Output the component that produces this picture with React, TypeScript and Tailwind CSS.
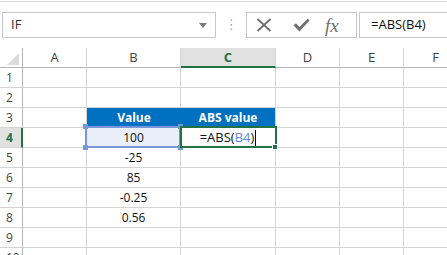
import React from "react";

type Col = { key: string; width: string };

const cols: Col[] = [
  { key: "A", width: "w-[64px]" },
  { key: "B", width: "w-[94px]" },
  { key: "C", width: "w-[95px]" },
  { key: "D", width: "w-[64px]" },
  { key: "E", width: "w-[64px]" },
  { key: "F", width: "w-[64px]" },
];

const values: Record<number, string> = {
  4: "100",
  5: "-25",
  6: "85",
  7: "-0.25",
  8: "0.56",
};

function FormulaBar() {
  return (
    <div className="pt-[1px]">
      <div className="flex items-start border-t border-[#d5d5d5] pt-[10px] pb-[10px]">
        <div className="ml-[2px] flex h-[26px] w-[214px] shrink-0 items-center justify-between border border-[#c6c6c6] bg-white pl-[8px] pr-[8px]">
          <span className="text-[13px] text-[#333]">IF</span>
          <svg width="8" height="5" viewBox="0 0 8 5">
            <path d="M0 0 L8 0 L4 5 Z" fill="#7a7a7a" />
          </svg>
        </div>
        <div className="flex h-[26px] w-[30px] shrink-0 items-center justify-center">
          <svg width="3" height="12" viewBox="0 0 3 12">
            <rect x="0.5" y="0.5" width="1.6" height="1.6" fill="#a8a8a8" />
            <rect x="0.5" y="5" width="1.6" height="1.6" fill="#a8a8a8" />
            <rect x="0.5" y="9.5" width="1.6" height="1.6" fill="#a8a8a8" />
          </svg>
        </div>
        <div className="flex h-[26px] w-[111px] shrink-0 items-center border border-[#c6c6c6] bg-white">
          <svg className="ml-[9px]" width="16" height="14" viewBox="0 0 16 14">
            <path d="M1.5 1 L14.5 13 M14.5 1 L1.5 13" stroke="#6f6f6f" strokeWidth="1.9" />
          </svg>
          <svg className="ml-[21px]" width="17" height="14" viewBox="0 0 17 14">
            <path d="M0.5 7.2 L3 5.2 L6.4 9 L14.8 0.6 L16.5 2.6 L6.4 13.4 Z" fill="#6f6f6f" />
          </svg>
          <span className="ml-[15px] font-['Liberation_Serif',serif] text-[19px] italic leading-none text-[#6f6f6f]">
            fx
          </span>
        </div>
        <div className="ml-[2px] flex h-[26px] w-[200px] shrink-0 items-center border border-[#c6c6c6] bg-white pl-[11px]">
          <span className="text-[13px] text-[#111]">=ABS(B4)</span>
        </div>
      </div>
    </div>
  );
}

function HeaderRow() {
  return (
    <div className="flex h-[20px]">
      <div className="relative h-[20px] w-[23px] shrink-0 border-r border-b border-[#b5b5b5] bg-white">
        <svg className="absolute right-[3px] bottom-[2px]" width="12" height="12" viewBox="0 0 12 12">
          <path d="M12 0 L12 12 L0 12 Z" fill="#dcdcdc" />
        </svg>
      </div>
      {cols.map((c) =>
        c.key === "C" ? (
          <div
            key={c.key}
            className={`${c.width} flex h-[20px] shrink-0 items-center justify-center border-r border-b-2 border-r-[#d4d4d4] border-b-[#217346] bg-[#e1e1e1] pt-[1px] text-[13px] font-bold text-[#217346]`}
          >
            {c.key}
          </div>
        ) : (
          <div
            key={c.key}
            className={`${c.width} flex h-[20px] shrink-0 items-center justify-center border-r border-b border-r-[#d4d4d4] border-b-[#b5b5b5] bg-white text-[13px] text-[#444]`}
          >
            {c.key}
          </div>
        )
      )}
    </div>
  );
}

function Row({ n }: { n: number }) {
  const active = n === 4;
  return (
    <div className="flex h-[20px]">
      {active ? (
        <div className="flex h-[20px] w-[23px] shrink-0 items-center border-r-2 border-b border-r-[#217346] border-b-[#d4d4d4] bg-[#e1e1e1] pl-[6px] text-[12px] font-bold text-[#217346]">
          {n}
        </div>
      ) : (
        <div className="flex h-[20px] w-[23px] shrink-0 items-center border-r border-b border-r-[#b5b5b5] border-b-[#d4d4d4] bg-white pl-[6px] text-[12px] text-[#444]">
          {n}
        </div>
      )}
      {cols.map((c) => {
        if (c.key === "B" && n === 3) {
          return (
            <div
              key={c.key}
              className={`${c.width} flex h-[20px] shrink-0 items-center justify-center border-b border-[#d4d4d4] bg-[#0070c0] text-[12px] font-bold text-white`}
            >
              Value
            </div>
          );
        }
        if (c.key === "C" && n === 3) {
          return (
            <div
              key={c.key}
              className={`${c.width} flex h-[20px] shrink-0 items-center justify-center border-r border-b border-[#d4d4d4] bg-[#0070c0] text-[12px] font-bold text-white`}
            >
              ABS value
            </div>
          );
        }
        if (c.key === "B" && n === 4) {
          return (
            <div
              key={c.key}
              className={`${c.width} relative flex h-[20px] shrink-0 items-center justify-center border-r border-b border-[#d4d4d4] bg-[#e9eef9] text-[12px] text-[#111]`}
            >
              100
              <div className="absolute top-[-2px] left-[-2px] h-[22px] w-[96px] border-2 border-[#7896dc]" />
              <div className="absolute top-[-4px] left-[-4px] h-[5px] w-[5px] bg-[#7896dc]" />
              <div className="absolute top-[-4px] right-[-3px] h-[5px] w-[5px] bg-[#7896dc]" />
              <div className="absolute bottom-[-3px] left-[-4px] h-[5px] w-[5px] bg-[#7896dc]" />
              <div className="absolute right-[-3px] bottom-[-3px] h-[5px] w-[5px] bg-[#7896dc]" />
            </div>
          );
        }
        if (c.key === "C" && n === 4) {
          return (
            <div
              key={c.key}
              className={`${c.width} relative flex h-[20px] shrink-0 items-center justify-center border-r border-b border-[#d4d4d4] bg-white text-[13px] text-[#111]`}
            >
              <span>
                =ABS(<span className="text-[#5b87d6]">B4</span>)
              </span>
              <span className="ml-[1px] h-[16px] w-[1px] bg-black" />
              <div className="absolute top-[-2px] left-[-1px] h-[22px] w-[97px] border-2 border-[#217346]" />
              <div className="absolute right-[-3px] bottom-[-3px] h-[6px] w-[6px] border border-white bg-[#217346]" />
            </div>
          );
        }
        return (
          <div
            key={c.key}
            className={`${c.width} flex h-[20px] shrink-0 items-center justify-center border-r border-b border-[#d4d4d4] bg-white text-[12px] text-[#111]`}
          >
            {c.key === "B" ? values[n] ?? "" : ""}
          </div>
        );
      })}
    </div>
  );
}

export default function App() {
  const rows = [1, 2, 3, 4, 5, 6, 7, 8, 9, 10];
  return (
    <div className="h-[255px] w-[447px] overflow-hidden bg-white font-['Open_Sans',sans-serif]">
      <FormulaBar />
      <HeaderRow />
      {rows.map((n) => (
        <Row key={n} n={n} />
      ))}
    </div>
  );
}
